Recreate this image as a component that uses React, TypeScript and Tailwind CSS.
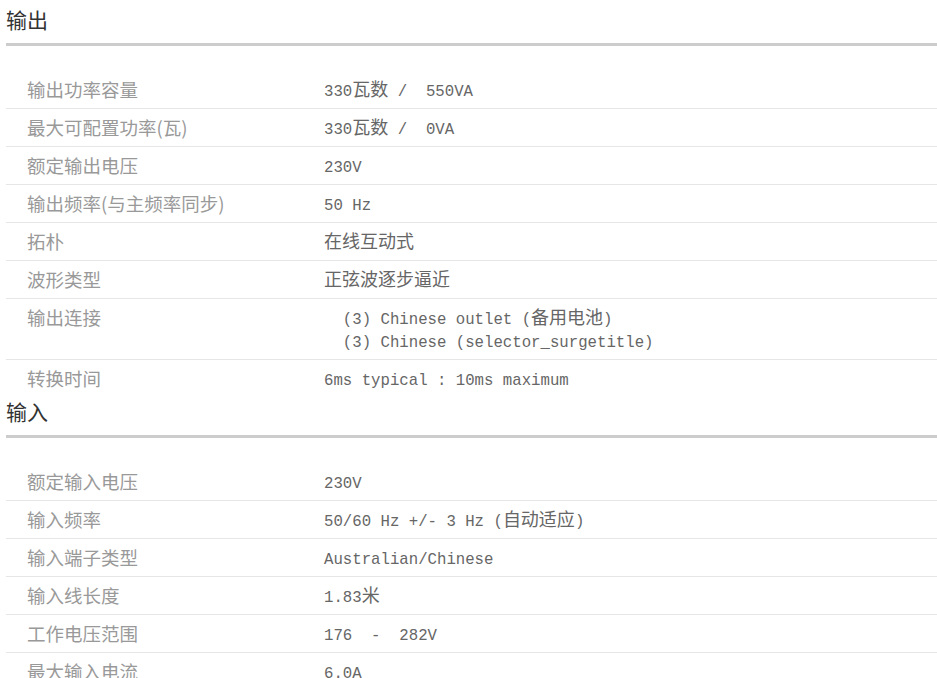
const outputRows: [string, string[]][] = [
  ["输出功率容量", ["330瓦数 /  550VA"]],
  ["最大可配置功率(瓦)", ["330瓦数 /  0VA"]],
  ["额定输出电压", ["230V"]],
  ["输出频率(与主频率同步)", ["50 Hz"]],
  ["拓朴", ["在线互动式"]],
  ["波形类型", ["正弦波逐步逼近"]],
  ["输出连接", ["  (3) Chinese outlet (备用电池)", "  (3) Chinese (selector_surgetitle)"]],
  ["转换时间", ["6ms typical : 10ms maximum"]],
];

const inputRows: [string, string[]][] = [
  ["额定输入电压", ["230V"]],
  ["输入频率", ["50/60 Hz +/- 3 Hz (自动适应)"]],
  ["输入端子类型", ["Australian/Chinese"]],
  ["输入线长度", ["1.83米"]],
  ["工作电压范围", ["176  -  282V"]],
  ["最大输入电流", ["6.0A"]],
];

function Value({ text }: { text: string }) {
  const parts = text.split(/([\u4e00-\u9fff]+)/);
  return (
    <div className="h-[23px]">
      {parts.map((p, i) =>
        /[\u4e00-\u9fff]/.test(p) ? (
          <span key={i} className="text-[18px] leading-[10px]">{p}</span>
        ) : (
          <span key={i}>{p}</span>
        )
      )}
    </div>
  );
}

function Section({ title, rows }: { title: string; rows: [string, string[]][] }) {
  return (
    <section>
      <h2 className="text-[21px] leading-[28px] text-[#333] font-['Noto_Sans_CJK_SC',sans-serif]">{title}</h2>
      <div className="mt-[10px] h-[3px] bg-[#cccccc]" />
      <div className="mt-[25px]">
        {rows.map(([label, values], i) => (
          <div
            key={label}
            className={`grid grid-cols-[318px_1fr] pt-[9px] pb-[4px] ${
              i < rows.length - 1 ? "border-b border-[#e6e6e6]" : ""
            }`}
          >
            <div className="pl-[21px] text-[18.5px] leading-[18px] text-[#999] font-['Noto_Sans_CJK_SC',sans-serif]">
              {label}
            </div>
            <div className="pt-[1px] text-[15.7px] leading-[23px] text-[#666] font-['Liberation_Mono','Noto_Sans_CJK_SC',monospace] whitespace-pre">
              {values.map((v) => (
                <Value key={v} text={v} />
              ))}
            </div>
          </div>
        ))}
      </div>
    </section>
  );
}

export default function App() {
  return (
    <div className="bg-white min-h-screen pt-[5px] pl-[6px] overflow-hidden">
      <Section title="输出" rows={outputRows} />
      <Section title="输入" rows={inputRows} />
    </div>
  );
}
